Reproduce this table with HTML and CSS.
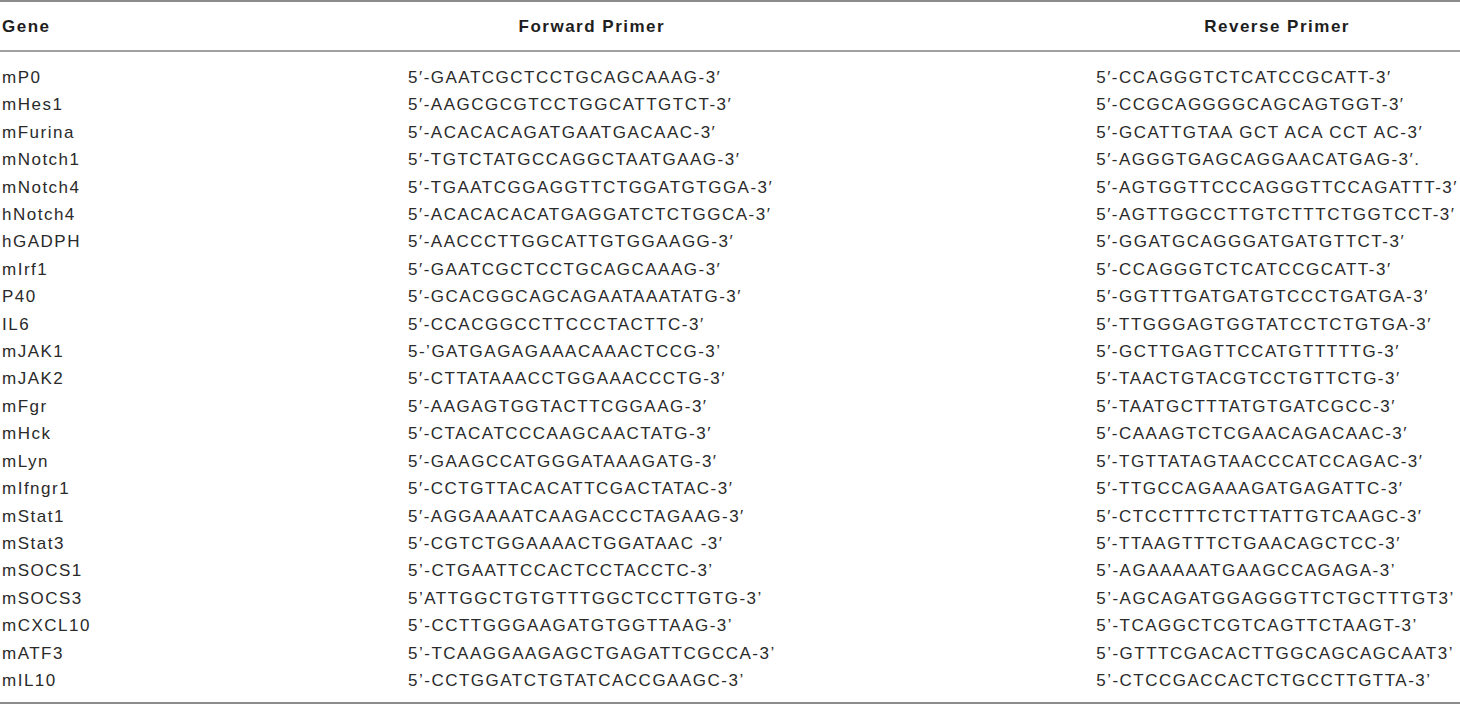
FILE: index.html
```html
<!DOCTYPE html>
<html lang="en">
<head>
<meta charset="utf-8">
<title>Primer sequences</title>
<link rel="stylesheet" href="styles.css">
</head>
<body>
<table class="primers">
  <thead>
    <tr>
      <th class="gene">Gene</th>
      <th class="fwd">Forward Primer</th>
      <th class="gap"></th>
      <th class="rev">Reverse Primer</th>
    </tr>
  </thead>
  <tbody>
    <tr class="first"><td class="gene">mP0</td><td class="fwd">5′-GAATCGCTCCTGCAGCAAAG-3′</td><td class="gap"></td><td class="rev">5′-CCAGGGTCTCATCCGCATT-3′</td></tr>
    <tr><td class="gene">mHes1</td><td class="fwd">5′-AAGCGCGTCCTGGCATTGTCT-3′</td><td class="gap"></td><td class="rev">5′-CCGCAGGGGCAGCAGTGGT-3′</td></tr>
    <tr><td class="gene">mFurina</td><td class="fwd">5′-ACACACAGATGAATGACAAC-3′</td><td class="gap"></td><td class="rev">5′-GCATTGTAA GCT ACA CCT AC-3′</td></tr>
    <tr><td class="gene">mNotch1</td><td class="fwd">5′-TGTCTATGCCAGGCTAATGAAG-3′</td><td class="gap"></td><td class="rev">5′-AGGGTGAGCAGGAACATGAG-3′.</td></tr>
    <tr><td class="gene">mNotch4</td><td class="fwd">5′-TGAATCGGAGGTTCTGGATGTGGA-3′</td><td class="gap"></td><td class="rev">5′-AGTGGTTCCCAGGGTTCCAGATTT-3′</td></tr>
    <tr><td class="gene">hNotch4</td><td class="fwd">5′-ACACACACATGAGGATCTCTGGCA-3′</td><td class="gap"></td><td class="rev">5′-AGTTGGCCTTGTCTTTCTGGTCCT-3′</td></tr>
    <tr><td class="gene">hGADPH</td><td class="fwd">5′-AACCCTTGGCATTGTGGAAGG-3′</td><td class="gap"></td><td class="rev">5′-GGATGCAGGGATGATGTTCT-3′</td></tr>
    <tr><td class="gene">mIrf1</td><td class="fwd">5′-GAATCGCTCCTGCAGCAAAG-3′</td><td class="gap"></td><td class="rev">5′-CCAGGGTCTCATCCGCATT-3′</td></tr>
    <tr><td class="gene">P40</td><td class="fwd">5′-GCACGGCAGCAGAATAAATATG-3′</td><td class="gap"></td><td class="rev">5′-GGTTTGATGATGTCCCTGATGA-3′</td></tr>
    <tr><td class="gene">IL6</td><td class="fwd">5′-CCACGGCCTTCCCTACTTC-3′</td><td class="gap"></td><td class="rev">5′-TTGGGAGTGGTATCCTCTGTGA-3′</td></tr>
    <tr><td class="gene">mJAK1</td><td class="fwd">5-’GATGAGAGAAACAAACTCCG-3’</td><td class="gap"></td><td class="rev">5′-GCTTGAGTTCCATGTTTTTG-3′</td></tr>
    <tr><td class="gene">mJAK2</td><td class="fwd">5′-CTTATAAACCTGGAAACCCTG-3′</td><td class="gap"></td><td class="rev">5′-TAACTGTACGTCCTGTTCTG-3′</td></tr>
    <tr><td class="gene">mFgr</td><td class="fwd">5′-AAGAGTGGTACTTCGGAAG-3′</td><td class="gap"></td><td class="rev">5′-TAATGCTTTATGTGATCGCC-3′</td></tr>
    <tr><td class="gene">mHck</td><td class="fwd">5′-CTACATCCCAAGCAACTATG-3′</td><td class="gap"></td><td class="rev">5′-CAAAGTCTCGAACAGACAAC-3′</td></tr>
    <tr><td class="gene">mLyn</td><td class="fwd">5′-GAAGCCATGGGATAAAGATG-3′</td><td class="gap"></td><td class="rev">5′-TGTTATAGTAACCCATCCAGAC-3′</td></tr>
    <tr><td class="gene">mIfngr1</td><td class="fwd">5′-CCTGTTACACATTCGACTATAC-3′</td><td class="gap"></td><td class="rev">5′-TTGCCAGAAAGATGAGATTC-3′</td></tr>
    <tr><td class="gene">mStat1</td><td class="fwd">5′-AGGAAAATCAAGACCCTAGAAG-3′</td><td class="gap"></td><td class="rev">5′-CTCCTTTCTCTTATTGTCAAGC-3′</td></tr>
    <tr><td class="gene">mStat3</td><td class="fwd">5′-CGTCTGGAAAACTGGATAAC -3′</td><td class="gap"></td><td class="rev">5′-TTAAGTTTCTGAACAGCTCC-3′</td></tr>
    <tr><td class="gene">mSOCS1</td><td class="fwd">5’-CTGAATTCCACTCCTACCTC-3’</td><td class="gap"></td><td class="rev">5’-AGAAAAATGAAGCCAGAGA-3’</td></tr>
    <tr><td class="gene">mSOCS3</td><td class="fwd">5’ATTGGCTGTGTTTGGCTCCTTGTG-3’</td><td class="gap"></td><td class="rev">5’-AGCAGATGGAGGGTTCTGCTTTGT3’</td></tr>
    <tr><td class="gene">mCXCL10</td><td class="fwd">5’-CCTTGGGAAGATGTGGTTAAG-3’</td><td class="gap"></td><td class="rev">5’-TCAGGCTCGTCAGTTCTAAGT-3’</td></tr>
    <tr><td class="gene">mATF3</td><td class="fwd">5’-TCAAGGAAGAGCTGAGATTCGCCA-3’</td><td class="gap"></td><td class="rev">5’-GTTTCGACACTTGGCAGCAGCAAT3’</td></tr>
    <tr class="last"><td class="gene">mIL10</td><td class="fwd">5’-CCTGGATCTGTATCACCGAAGC-3’</td><td class="gap"></td><td class="rev">5’-CTCCGACCACTCTGCCTTGTTA-3’</td></tr>
  </tbody>
</table>
</body>
</html>
```

FILE: styles.css
```css
html, body {
  margin: 0;
  padding: 0;
  background: #ffffff;
}

.primers {
  display: grid;
  grid-template-columns: 408px max-content 1fr max-content;
  width: 1460px;
  box-sizing: border-box;
  border-top: 2px solid #8c8c8c;
  border-bottom: 2px solid #8c8c8c;
  font-family: "Liberation Sans", Arial, sans-serif;
  font-size: 17px;
  letter-spacing: 1.5px;
  color: #2a2a2a;
  white-space: nowrap;
}

.primers thead,
.primers tbody,
.primers tr {
  display: contents;
}

.primers th,
.primers td {
  display: block;
  padding: 0;
}

.primers th {
  font-weight: bold;
  color: #1e1e1e;
  height: 48px;
  line-height: 50px;
  border-bottom: 2px solid #a0a0a0;
  text-align: center;
}

.primers td {
  line-height: 27.4px;
  text-align: left;
}

.primers .gene {
  padding-left: 2px;
  text-align: left;
}

.primers .rev {
  padding-right: 2px;
}

.primers tr.first td {
  padding-top: 12px;
}

.primers tr.last td {
  padding-bottom: 8px;
}
```
